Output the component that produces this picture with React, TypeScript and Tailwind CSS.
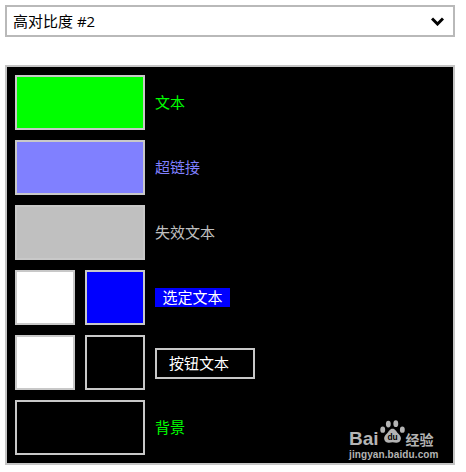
const font = 'font-["Open_Sans","Noto_Sans_CJK_SC",sans-serif]';

function Swatch({ color, wide = true }: { color: string; wide?: boolean }) {
  return <div className={`h-[55px] border-2 border-[#c8c8c8] ${wide ? 'w-[130px]' : 'w-[60px]'} ${color}`} />;
}

function Row({ children, label }: { children: React.ReactNode; label: React.ReactNode }) {
  return (
    <div className="flex items-center gap-[10px]">
      <div className="flex w-[130px] gap-[10px]">{children}</div>
      {label}
    </div>
  );
}

function Watermark() {
  return (
    <div className="absolute right-[16px] bottom-[2px] flex w-[88px] flex-col text-[#b4b4b4]">
      <div className="flex items-end">
        <span className="font-['Liberation_Sans',sans-serif] text-[19px] leading-[18px] font-bold">Bai</span>
        <svg width="28" height="31" viewBox="0 0 30 30" className="-mr-[1px]" fill="currentColor">
          <ellipse cx="10" cy="6" rx="2.6" ry="3.6" />
          <ellipse cx="18" cy="5.5" rx="2.6" ry="3.6" />
          <ellipse cx="4" cy="12" rx="2.6" ry="3.4" />
          <ellipse cx="25" cy="12" rx="2.6" ry="3.4" />
          <path d="M14.5 11c-3 0-4 3-6 5-2 1.800-3 3.500-3 5.500 0 3 2.500 4.500 5 4.500 1.500 0 2.800-.6 4-.6s2.500.6 4 .6c2.500 0 5-1.500 5-4.500 0-2-1-3.700-3-5.500-2-2-3-5-6-5z" />
          <text x="14.500" y="23.500" textAnchor="middle" fontSize="9" fontWeight="700" fill="#000" fontFamily="Liberation Sans, sans-serif">du</text>
        </svg>
        <span className="font-['Noto_Sans_CJK_SC',sans-serif] text-[14px] leading-[18px] font-bold whitespace-nowrap">经验</span>
      </div>
      <span className="font-['Liberation_Sans',sans-serif] text-[10px] leading-[13px] font-bold tracking-[0.1px] whitespace-nowrap">jingyan.baidu.com</span>
    </div>
  );
}

export default function App() {
  return (
    <div className={`${font} h-[472px] w-[466px] bg-white px-[5px] pt-[5px] text-[15px]`}>
      <div className="flex h-[32px] w-[450px] items-center justify-between border-2 border-[#b9b9b9] pr-[9px] pl-[6px] text-black">
        <span>高对比度 #2</span>
        <svg width="13" height="9" viewBox="0 0 13 9" fill="none" stroke="#000" strokeWidth="3">
          <path d="M1 1.500 6.500 7 12 1.500" />
        </svg>
      </div>

      <div className="relative mt-[28px] flex h-[400px] w-[450px] flex-col gap-[10px] border-2 border-[#c4c4c4] bg-black p-[8px]">
        <Row label={<span className="text-[#00ff00]">文本</span>}>
          <Swatch color="bg-[#00ff00]" />
        </Row>
        <Row label={<span className="text-[#8080ff]">超链接</span>}>
          <Swatch color="bg-[#8080ff]" />
        </Row>
        <Row label={<span className="text-[#c0c0c0]">失效文本</span>}>
          <Swatch color="bg-[#c0c0c0]" />
        </Row>
        <Row label={<span className="flex h-[19px] w-[75px] items-center justify-center bg-[#0000ff] text-white">选定文本</span>}>
          <Swatch color="bg-white" wide={false} />
          <Swatch color="bg-[#0000ff]" wide={false} />
        </Row>
        <Row label={<span className="mt-[2px] flex h-[31px] w-[100px] items-center border-2 border-[#c8c8c8] pl-[12px] text-white">按钮文本</span>}>
          <Swatch color="bg-white" wide={false} />
          <Swatch color="bg-black" wide={false} />
        </Row>
        <Row label={<span className="text-[#00ff00]">背景</span>}>
          <Swatch color="bg-black" />
        </Row>
        <Watermark />
      </div>
    </div>
  );
}
